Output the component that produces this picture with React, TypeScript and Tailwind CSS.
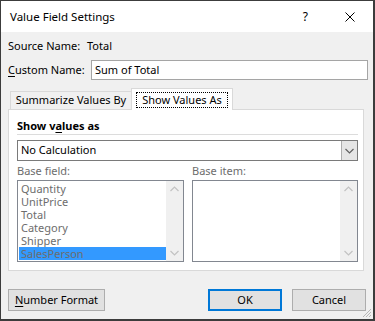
import React from "react";

const font = { fontFamily: '"Noto Sans", "Liberation Sans", sans-serif' };

function ChevronUp({ color = "#c2c2c2" }: { color?: string }) {
  return (
    <svg width="9" height="6" viewBox="0 0 9 6">
      <path d="M0.5 5 L4.5 1 L8.5 5" fill="none" stroke={color} strokeWidth="1.2" />
    </svg>
  );
}
function ChevronDown({ color = "#c2c2c2" }: { color?: string }) {
  return (
    <svg width="9" height="6" viewBox="0 0 9 6">
      <path d="M0.5 1 L4.5 5 L8.5 1" fill="none" stroke={color} strokeWidth="1.2" />
    </svg>
  );
}

function ScrollBar() {
  return (
    <div className="w-[17px] h-full bg-[#f0f0f0] flex flex-col items-center justify-between py-[5px]">
      <ChevronUp />
      <ChevronDown />
    </div>
  );
}

export default function App() {
  const items = ["Quantity", "UnitPrice", "Total", "Category", "Shipper", "SalesPerson"];
  return (
    <div
      className="relative w-[375px] h-[321px] bg-[#f0f0f0] border-l border-t border-r-2 border-b-2 border-[#3c3c3c] flex flex-col text-[11px] text-black overflow-hidden"
      style={font}
    >
      {/* Title bar */}
      <div className="h-[31px] bg-white flex items-center pl-[9px] pr-[18px] shrink-0">
        <div className="flex-1 text-[11.5px]">Value Field Settings</div>
        <div className="text-[12px] leading-none mr-[37px]">?</div>
        <svg width="10" height="10" viewBox="0 0 10 10">
          <path d="M0.5 0.5 L9.5 9.5 M9.5 0.5 L0.5 9.5" stroke="#000" strokeWidth="1" fill="none" />
        </svg>
      </div>

      {/* Body */}
      <div className="pl-[7px] flex flex-col">
        <div className="mt-[4px] h-[20px] flex items-center">
          <span className="w-[79px]">Source Name:</span>
          <span>Total</span>
        </div>
        <div className="mt-[4px] h-[20px] flex items-center">
          <span className="w-[83px]">
            <u className="underline-offset-2">C</u>ustom Name:
          </span>
          <div className="w-[277px] h-[20px] bg-white border border-[#a5a5a5] flex items-center pl-[3px]">
            Sum of Total
          </div>
        </div>

        {/* Tabs */}
        <div className="mt-[8px] h-[21px] flex items-end pl-[2px] relative z-10">
          <div className="w-[121px] h-[18px] border-l border-t border-[#d9d9d9] bg-[#f0f0f0] flex items-center justify-center">
            Summarize Values By
          </div>
          <div className="w-[102px] h-[22px] -mb-px border-l border-t border-r border-[#d9d9d9] bg-white flex justify-center pt-[3px]">
            <div className="w-[92px] h-[16px] border border-dotted border-black flex items-center justify-center">
              Show Values As
            </div>
          </div>
        </div>

        {/* Panel */}
        <div className="w-[356px] h-[162px] bg-white border border-[#d9d9d9] pl-[8px] pr-[5px] flex flex-col">
          <div className="mt-[8px] h-[16px] flex items-center font-bold">
            Show v<u className="underline-offset-2">a</u>lues as
          </div>
          <div className="h-px bg-[#dcdcdc]" />
          <div className="mt-[5px] h-[21px] border border-[#7a7a7a] bg-white flex items-center">
            <span className="flex-1 pl-[3px]">No Calculation</span>
            <div className="w-[16px] h-[19px] bg-[#e5e5e5] border-l border-[#adadad] flex items-center justify-center">
              <ChevronDown color="#606060" />
            </div>
          </div>
          <div className="mt-[2px] h-[16px] flex items-center text-[#6d6d6d]">
            <span className="w-[175px]">Base field:</span>
            <span>Base item:</span>
          </div>
          <div className="mt-[1px] flex gap-[8px]">
            <div className="w-[167px] h-[82px] border border-[#828790] bg-white flex">
              <div className="flex-1 pt-px pl-px flex flex-col">
                {items.map((it, i) => (
                  <div
                    key={it}
                    className={
                      "h-[13px] leading-[13px] pl-[2px] text-[#6d6d6d] " +
                      (i === items.length - 1 ? "bg-[#3399ff]" : "")
                    }
                  >
                    {it}
                  </div>
                ))}
              </div>
              <ScrollBar />
            </div>
            <div className="w-[166px] h-[82px] border border-[#828790] bg-white flex justify-end">
              <ScrollBar />
            </div>
          </div>
        </div>

        {/* Buttons */}
        <div className="mt-[18px] h-[22px] flex">
          <div className="w-[97px] h-[22px] bg-[#e1e1e1] border border-[#adadad] flex items-center justify-center">
            <span>
              <u className="underline-offset-2">N</u>umber Format
            </span>
          </div>
          <div className="ml-[103px] w-[74px] h-[22px] bg-[#e1e1e1] border-2 border-[#0078d7] flex items-center justify-center">
            OK
          </div>
          <div className="ml-[10px] w-[74px] h-[22px] bg-[#e1e1e1] border border-[#adadad] flex items-center justify-center">
            Cancel
          </div>
        </div>
      </div>

      {/* resize grip */}
      <svg className="absolute right-[1px] bottom-[1px]" width="11" height="11" viewBox="0 0 11 11">
        <path d="M10 2 L2 10 M10 5 L5 10 M10 8 L8 10" stroke="#b8b8b8" strokeWidth="1" fill="none" />
      </svg>
    </div>
  );
}
